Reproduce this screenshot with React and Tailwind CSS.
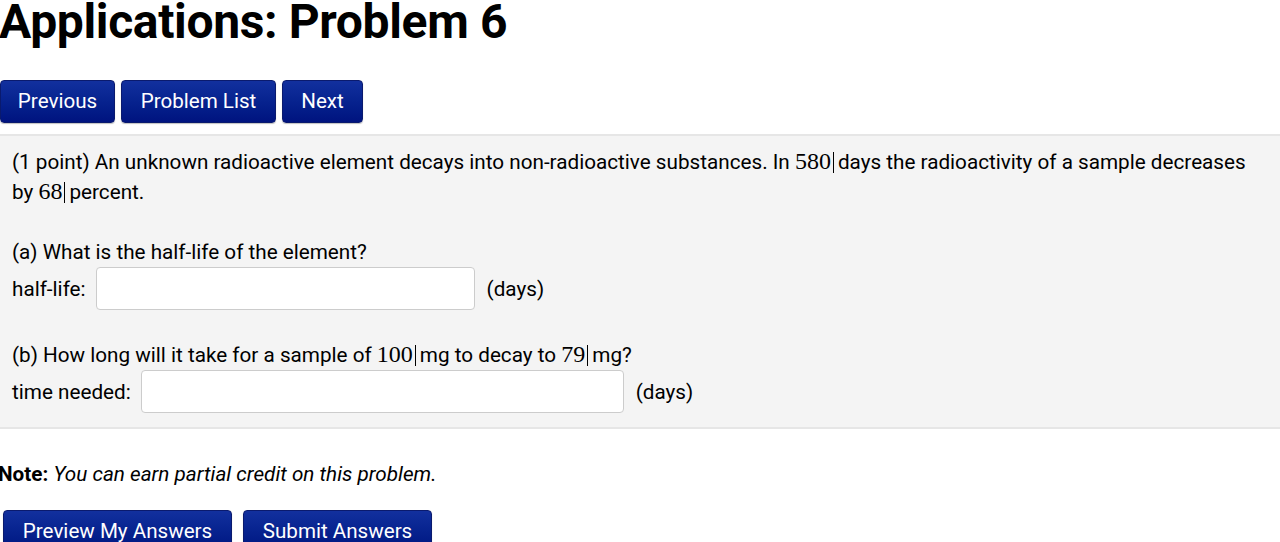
import React from 'react'

const btn =
  'h-[43px] px-[16px] rounded-[4px] border border-[#0a1a6e] bg-gradient-to-b from-[#12309e] to-[#00137f] text-white text-[20.6px] leading-none shadow-[0_1px_1px_rgba(0,0,0,0.25)]'

const MathNum = ({ children }) => (
  <>
    <span className="font-['Liberation_Serif',serif] text-[24px] leading-[0]">{children}</span>
    <span className="inline-block w-[1px] h-[21px] bg-black ml-[2px] mr-[4px] align-[-4px]" />
  </>
)

const AnswerRow = ({ label, width }) => (
  <div className="flex items-center h-[43px]">
    <span>{label}</span>
    <input
      type="text"
      className={`ml-[10px] h-[43px] ${width} rounded-[4px] border border-[#cccccc] bg-white outline-none`}
    />
    <span className="ml-[12px]">(days)</span>
  </div>
)

export default function App() {
  return (
    <div className="w-[1280px] h-[542px] overflow-hidden bg-white text-black font-['Roboto',sans-serif] text-[20.7px] leading-[30px]">
      <h1 className="text-[48px] font-bold leading-[43px] -ml-[1px] tracking-[-0.35px] whitespace-nowrap">
        Applications: Problem 6
      </h1>

      <div className="flex gap-[6px] mt-[37px]">
        <button className={`${btn} w-[115px]`}>Previous</button>
        <button className={`${btn} w-[155px]`}>Problem List</button>
        <button className={`${btn} w-[81px]`}>Next</button>
      </div>

      <div className="mt-[11px] bg-[#f4f4f4] border-t-[2px] border-b-[2px] border-[#e6e6e6] pt-[11px] pb-[14px] pl-[12px] pr-[20px]">
        <p>
          (1 point) An unknown radioactive element decays into non-radioactive substances. In{' '}
          <MathNum>580</MathNum>days the radioactivity of a sample decreases by <MathNum>68</MathNum>percent.
        </p>
        <div className="h-[30px]" />
        <p>(a) What is the half-life of the element?</p>
        <AnswerRow label="half-life:" width="w-[379px]" />
        <div className="h-[30px]" />
        <p>
          (b) How long will it take for a sample of <MathNum>100</MathNum>mg to decay to{' '}
          <MathNum>79</MathNum>mg?
        </p>
        <AnswerRow label="time needed:" width="w-[483px]" />
      </div>

      <p className="mt-[30px] -ml-[2px] whitespace-nowrap">
        <span className="font-bold">Note:</span>{' '}
        <span className="italic">You can earn partial credit on this problem.</span>
      </p>

      <div className="flex gap-[11px] mt-[21px] ml-[3px]">
        <button className={`${btn} w-[229px]`}>Preview My Answers</button>
        <button className={`${btn} w-[189px]`}>Submit Answers</button>
      </div>
    </div>
  )
}
